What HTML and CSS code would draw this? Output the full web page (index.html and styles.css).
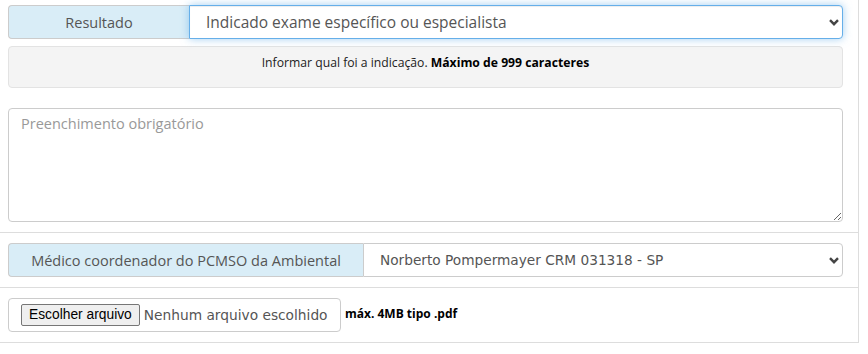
FILE: index.html
```html
<!DOCTYPE html>
<html lang="pt-BR">
<head>
    <meta charset="UTF-8">
    <meta name="viewport" content="width=device-width, initial-scale=1.0">
    <title>Resultado do exame</title>
    <link rel="stylesheet" href="styles.css">
</head>
<body>
    <div class="panel">
        <div class="section">
            <div class="input-group">
                <span class="addon addon-result">Resultado</span>
                <div class="select-wrap">
                    <select class="form-control focused">
                        <option>Indicado exame específico ou especialista</option>
                    </select>
                    <svg class="chevron" width="10" height="7" viewBox="0 0 10 7"><path d="M1 1.2 L5 5.2 L9 1.2" fill="none" stroke="#444" stroke-width="2.4"/></svg>
                </div>
            </div>
            <div class="well">
                Informar qual foi a indicação.&nbsp;<strong>Máximo de 999 caracteres</strong>
            </div>
            <textarea class="form-control notes" placeholder="Preenchimento obrigatório"></textarea>
        </div>

        <div class="section">
            <div class="input-group">
                <span class="addon addon-doctor">Médico coordenador do PCMSO da Ambiental</span>
                <div class="select-wrap">
                    <select class="form-control doctor">
                        <option>Norberto Pompermayer CRM 031318 - SP</option>
                    </select>
                    <svg class="chevron" width="10" height="7" viewBox="0 0 10 7"><path d="M1 1.2 L5 5.2 L9 1.2" fill="none" stroke="#444" stroke-width="2.4"/></svg>
                </div>
            </div>
        </div>

        <div class="section">
            <div class="upload">
                <label class="file-box">
                    <span class="file-btn">Escolher arquivo</span>
                    <span class="file-name">Nenhum arquivo escolhido</span>
                    <input type="file" accept=".pdf" class="file-input">
                </label>
                <span class="file-hint">máx. 4MB tipo .pdf</span>
            </div>
        </div>
    </div>
</body>
</html>
```

FILE: styles.css
```css
body {
    margin: 0;
    font-family: "Open Sans", sans-serif;
    font-size: 14.5px;
    color: #555;
    background-color: #fff;
}
.panel {
    width: 858px;
    border-right: 1px solid #ddd;
}
.section {
    padding: 10px 15px 10px 8px;
    border-bottom: 1px solid #ddd;
}
.section:first-child {
    padding-top: 5px;
}
.input-group {
    display: flex;
    height: 34px;
}
.addon {
    display: flex;
    align-items: center;
    justify-content: center;
    box-sizing: border-box;
    background-color: #d9edf7;
    border: 1px solid #ccc;
    border-right: none;
    border-radius: 4px 0 0 4px;
    color: #555;
    font-size: 14.5px;
}
.addon-result {
    width: 181px;
}
.addon-doctor {
    width: 355px;
}
.select-wrap {
    position: relative;
    flex-grow: 1;
}
.form-control {
    display: block;
    width: 100%;
    box-sizing: border-box;
    border: 1px solid #ccc;
    background-color: #fff;
    color: #555;
    font-family: "Open Sans", sans-serif;
    font-size: 14.5px;
}
select.form-control {
    height: 34px;
    padding: 0 30px 0 16px;
    border-radius: 0 4px 4px 0;
    appearance: none;
    -webkit-appearance: none;
    outline: none;
}
select.focused {
    font-size: 15.5px;
    border-color: #66afe9;
    box-shadow: inset 0 1px 1px rgba(0, 0, 0, .075), 0 0 8px rgba(102, 175, 233, .6);
}
select.doctor {
    font-family: "DejaVu Sans", sans-serif;
    font-size: 13.7px;
}
.chevron {
    position: absolute;
    right: 4px;
    top: 14px;
    pointer-events: none;
}
.well {
    margin-top: 7px;
    height: 42px;
    box-sizing: border-box;
    display: flex;
    justify-content: center;
    padding-top: 7px;
    background-color: #f4f4f4;
    border: 1px solid #e3e3e3;
    border-radius: 4px;
    color: #222;
    font-size: 12.2px;
}
.well strong {
    color: #000;
}
.notes {
    margin-top: 20px;
    height: 114px;
    padding: 5px 12px;
    border-radius: 4px;
    resize: vertical;
}
.notes::placeholder {
    color: #999;
}
.upload {
    display: flex;
    align-items: center;
    gap: 4px;
}
.file-box {
    display: flex;
    align-items: center;
    box-sizing: border-box;
    width: 333px;
    height: 34px;
    padding: 0 12px;
    border: 1px solid #ccc;
    border-radius: 4px;
    cursor: pointer;
}
.file-btn {
    font-family: "Liberation Sans", Arial, sans-serif;
    font-size: 13.8px;
    color: #000;
    background-color: #efefef;
    border: 1px solid #767676;
    border-radius: 2px;
    padding: 1px 7px;
    line-height: 18px;
}
.file-name {
    margin-left: 4px;
    font-family: "DejaVu Sans", sans-serif;
    font-size: 13.75px;
    color: #555;
}
.file-input {
    display: none;
}
.file-hint {
    margin-bottom: 4px;
    font-size: 12px;
    font-weight: bold;
    color: #000;
}
```
